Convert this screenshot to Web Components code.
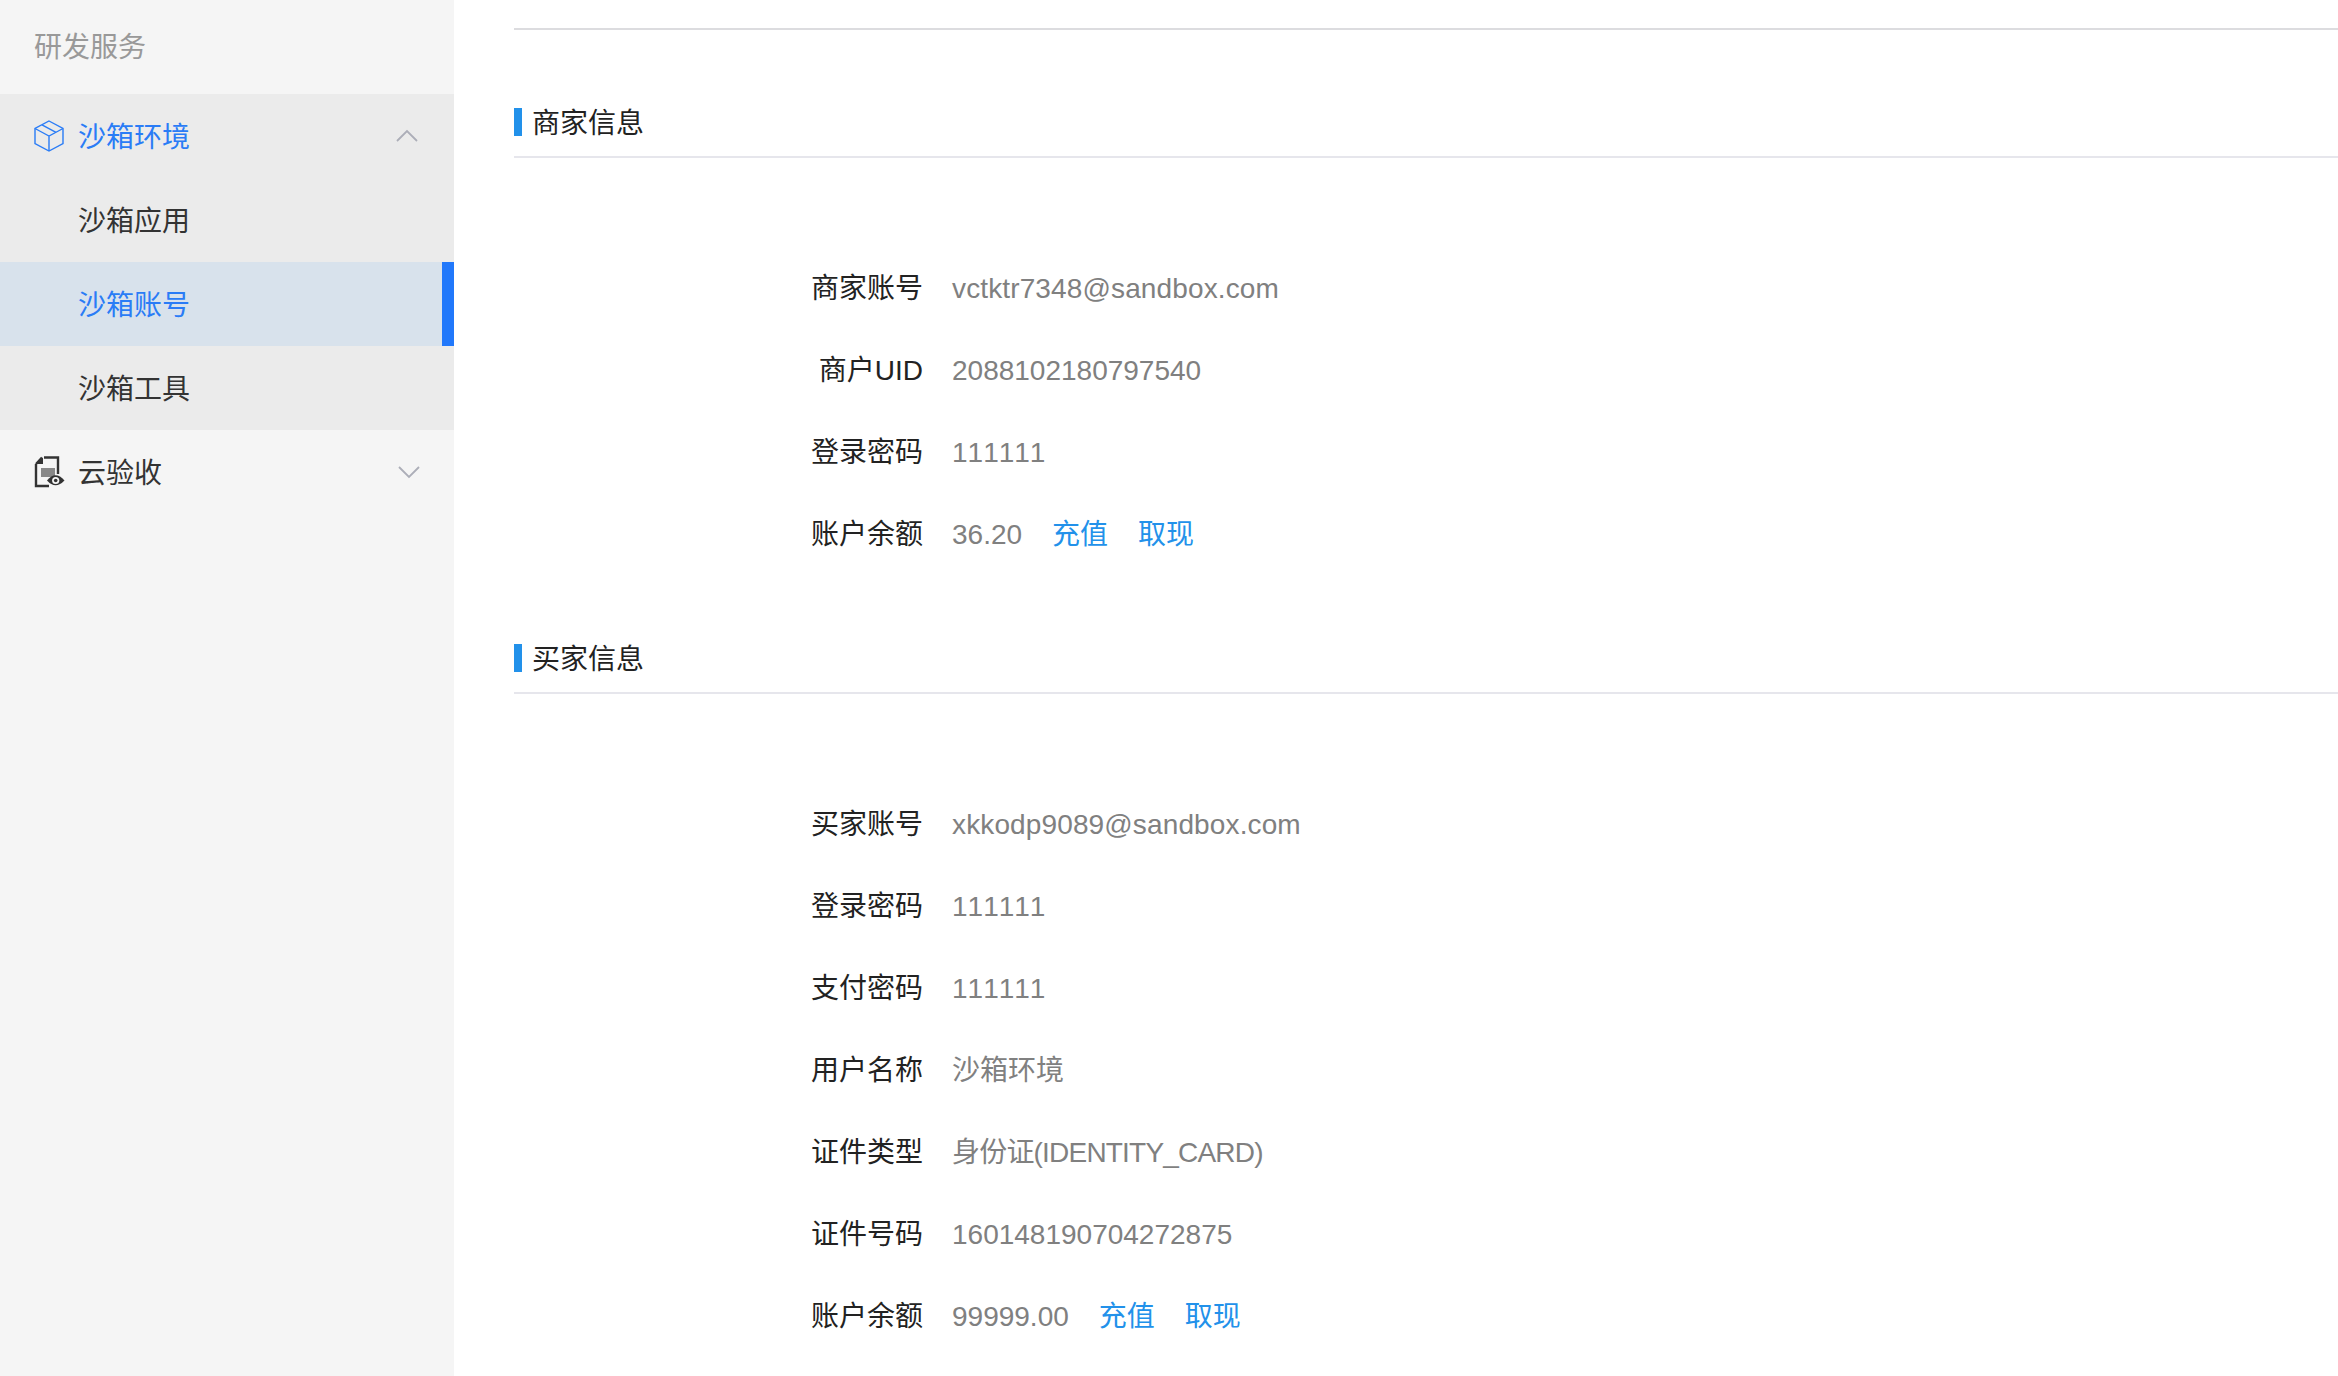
<!DOCTYPE html>
<html lang="zh-CN">
<head>
<meta charset="utf-8">
<title>沙箱账号</title>
<style>
    html, body { margin: 0; height: 100%; overflow: hidden; background: #fff; }
    body {
        display: flex;
        height: 1376px;
        font-family: "Liberation Sans", "Noto Sans CJK SC", sans-serif;
    }
</style>
</head>
<body>
<side-nav>
    <nav-caption>研发服务</nav-caption>
    <nav-group>
        <nav-head open active icon="box">沙箱环境</nav-head>
        <nav-item>沙箱应用</nav-item>
        <nav-item selected>沙箱账号</nav-item>
        <nav-item>沙箱工具</nav-item>
    </nav-group>
    <nav-head icon="doc">云验收</nav-head>
</side-nav>
<main-panel>
    <info-section title="商家信息">
        <info-row label="商家账号" spacing="0.13">vctktr7348@sandbox.com</info-row>
        <info-row label="商户UID">2088102180797540</info-row>
        <info-row label="登录密码">111111</info-row>
        <info-row label="账户余额" actions>36.20</info-row>
    </info-section>
    <info-section title="买家信息">
        <info-row label="买家账号" spacing="0.13">xkkodp9089@sandbox.com</info-row>
        <info-row label="登录密码">111111</info-row>
        <info-row label="支付密码">111111</info-row>
        <info-row label="用户名称">沙箱环境</info-row>
        <info-row label="证件类型" spacing="-0.8">身份证(IDENTITY_CARD)</info-row>
        <info-row label="证件号码">160148190704272875</info-row>
        <info-row label="账户余额" actions>99999.00</info-row>
    </info-section>
</main-panel>
<script>
class SideNav extends HTMLElement {
    constructor() {
        super();
        this.attachShadow({ mode: "open" });
        this.shadowRoot.innerHTML = `
            <style>
                :host { display: block; width: 454px; flex: none; height: 100%; background: #f5f5f5; }
            </style>
            <slot></slot>
        `;
    }
}

class NavCaption extends HTMLElement {
    constructor() {
        super();
        this.attachShadow({ mode: "open" });
        this.shadowRoot.innerHTML = `
            <style>
                :host { display: flex; align-items: center; height: 94px; padding: 0 0 4px 34px; box-sizing: border-box;
                    font-size: 28px; color: #999; }
            </style>
            <slot></slot>
        `;
    }
}

class NavGroup extends HTMLElement {
    constructor() {
        super();
        this.attachShadow({ mode: "open" });
        this.shadowRoot.innerHTML = `
            <style>
                :host { display: block; background: #ebebeb; }
            </style>
            <slot></slot>
        `;
    }
}

const NAV_ICONS = {
    box: `<svg width="32" height="32" viewBox="0 0 32 32" fill="none" stroke="#2a7cf6" stroke-width="1.4">
            <path d="M16 1 L30 8.5 V23.5 L16 31 L2 23.5 V8.5 Z"/>
            <path d="M2 8.5 L16 16 L30 8.5 M16 16 V31"/>
            <path d="M9 4.8 L23 12.3"/>
          </svg>`,
    doc: `<svg width="32" height="32" viewBox="0 0 32 32">
            <path d="M10 1.5 H24 V18 M2 8 L8 1.5 M2 8 V30 H15" fill="none" stroke="#333" stroke-width="2.4"/>
            <path d="M2 8 L9 1.5 V8 Z" fill="#333"/>
            <rect x="7" y="12" width="14" height="9" fill="#888"/>
            <path d="M13 24.5 Q21.5 14 30.5 24.5 Q21.5 34 13 24.5 Z" fill="#333"/>
            <circle cx="21.7" cy="24.5" r="3.6" fill="#f5f5f5"/>
            <circle cx="21.7" cy="24.5" r="1.8" fill="#333"/>
          </svg>`
};

class NavHead extends HTMLElement {
    constructor() {
        super();
        this.attachShadow({ mode: "open" });
    }

    connectedCallback() {
        const open = this.hasAttribute("open");
        const icon = NAV_ICONS[this.getAttribute("icon")] || "";
        const chevron = open ? "M1 12 L11 2 L21 12" : "M1 2 L11 12 L21 2";
        const iconLeft = open ? 33 : 34;

        this.shadowRoot.innerHTML = `
            <style>
                :host { display: flex; align-items: center; height: 84px; box-sizing: border-box;
                    font-size: 28px; color: #333; }
                :host([active]) { color: #2a7cf6; }
                .icon { display: flex; width: 32px; height: 32px; margin: 0 ${78 - iconLeft - 32}px 0 ${iconLeft}px; }
                .label { flex: 1; padding-bottom: 2px; }
                .chevron { margin-right: ${open ? 36 : 34}px; display: block; }
            </style>
            <span class="icon">${icon}</span>
            <span class="label"><slot></slot></span>
            <svg class="chevron" width="22" height="14" viewBox="0 0 22 14" fill="none" stroke="#acaeb8" stroke-width="1.8"><path d="${chevron}"/></svg>
        `;
    }
}

class NavItem extends HTMLElement {
    constructor() {
        super();
        this.attachShadow({ mode: "open" });
        this.shadowRoot.innerHTML = `
            <style>
                :host { display: flex; align-items: center; height: 84px; padding: 0 0 2px 78px; box-sizing: border-box;
                    font-size: 28px; color: #333; }
                :host([selected]) { background: #d8e2ec; color: #2a7cf6; border-right: 12px solid #2178fb; }
            </style>
            <slot></slot>
        `;
    }
}

class MainPanel extends HTMLElement {
    constructor() {
        super();
        this.attachShadow({ mode: "open" });
        this.shadowRoot.innerHTML = `
            <style>
                :host { display: block; flex: 1; min-width: 0; padding: 28px 0 0 60px; }
                .top { height: 2px; background: #dcdcdf; margin-bottom: 78px; }
            </style>
            <div class="top"></div>
            <slot></slot>
        `;
    }
}

class InfoSection extends HTMLElement {
    constructor() {
        super();
        this.attachShadow({ mode: "open" });
        this.shadowRoot.innerHTML = `
            <style>
                :host { display: block; margin-bottom: 68px; }
                .title { display: flex; align-items: center; height: 28px; color: #222; font-size: 28px; }
                .title::before { content: ""; width: 8px; height: 28px; margin-right: 10px; background: #2291ea; }
                .title span { margin-top: -2px; }
                .rule { height: 2px; margin: 20px 0 90px; background: #e6e6ec; }
                .rows { display: block; }
            </style>
            <div class="title"><span id="title"></span></div>
            <div class="rule"></div>
            <div class="rows"><slot></slot></div>
        `;
    }

    connectedCallback() {
        this.shadowRoot.querySelector("#title").textContent = this.getAttribute("title");
    }
}

class InfoRow extends HTMLElement {
    constructor() {
        super();
        this.attachShadow({ mode: "open" });
    }

    connectedCallback() {
        const links = this.hasAttribute("actions")
            ? `<a>充值</a><a>取现</a>`
            : "";
        const spacing = this.getAttribute("spacing") || 0;

        this.shadowRoot.innerHTML = `
            <style>
                :host { display: flex; align-items: baseline; height: 82px; line-height: 82px; font-size: 28px; }
                .label { width: 409px; text-align: right; color: #222; flex: none; }
                .value { margin-left: 29px; color: #808080; font-kerning: none; letter-spacing: ${spacing}px; }
                a { margin-left: 30px; color: #2291ea; }
            </style>
            <span class="label">${this.getAttribute("label")}</span>
            <span class="value"><slot></slot></span>
            ${links}
        `;
    }
}

customElements.define("side-nav", SideNav);
customElements.define("nav-caption", NavCaption);
customElements.define("nav-group", NavGroup);
customElements.define("nav-head", NavHead);
customElements.define("nav-item", NavItem);
customElements.define("main-panel", MainPanel);
customElements.define("info-section", InfoSection);
customElements.define("info-row", InfoRow);
</script>
</body>
</html>
